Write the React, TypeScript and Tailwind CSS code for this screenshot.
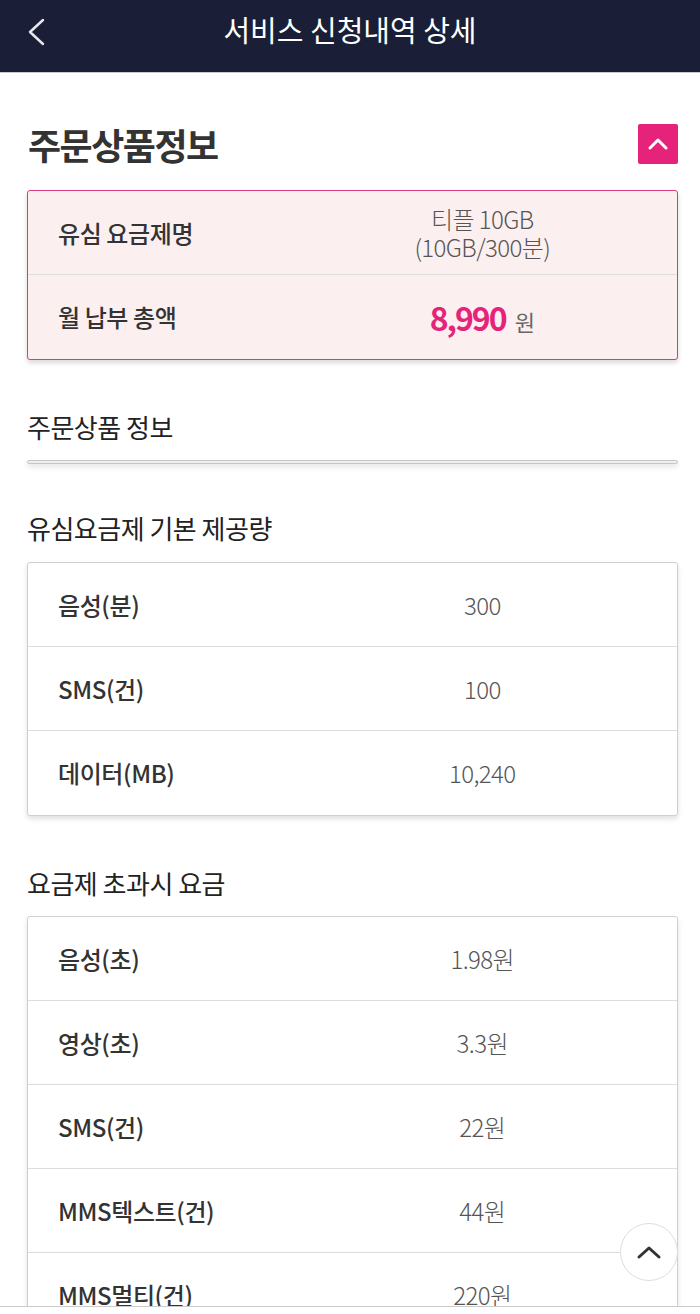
import React from 'react'

const basicRows = [
  { label: '음성(분)', value: '300' },
  { label: 'SMS(건)', value: '100' },
  { label: '데이터(MB)', value: '10,240' },
]

const overRows = [
  { label: '음성(초)', value: '1.98원' },
  { label: '영상(초)', value: '3.3원' },
  { label: 'SMS(건)', value: '22원' },
  { label: 'MMS텍스트(건)', value: '44원' },
  { label: 'MMS멀티(건)', value: '220원' },
  { label: '데이터(MB)', value: '22.53원' },
]

const InfoTable = ({ rows }: { rows: { label: string; value: string }[] }) => {
  return (
    <div className="border border-[#cfcfcf] rounded-[3px] bg-white shadow-[0_3px_5px_rgba(0,0,0,0.12)]">
      {rows.map((r, i) => (
        <div
          key={r.label + i}
          className={
            'flex items-center h-[84px] ' + (i < rows.length - 1 ? 'border-b border-[#dcdcdc]' : '')
          }
        >
          <div className="w-[40%] pl-[30px] text-[24px] font-medium tracking-[-0.4px] text-[#333]">{r.label}</div>
          <div className="w-[60%] text-center text-[24px] font-light tracking-[-0.6px] text-[#555]">{r.value}</div>
        </div>
      ))}
    </div>
  )
}

const App = () => {
  return (
    <div className="min-h-[1314px] bg-white" style={{ fontFamily: '"Noto Sans CJK KR", "Noto Sans", sans-serif' }}>
      {/* header */}
      <div className="h-[73px] bg-[#1a1f37] border-b border-[#c9c9c9] flex items-center justify-center relative pb-[12px]">
        <svg className="absolute left-[24px] top-[17px]" width="24" height="30" viewBox="0 0 24 30" fill="none">
          <path d="M19 3 L6 15 L19 27" stroke="#e8e8ee" strokeWidth="2.4" strokeLinecap="round" strokeLinejoin="round" />
        </svg>
        <h1 className="text-white text-[29px] font-normal">서비스 신청내역 상세</h1>
      </div>

      <div className="pl-[27px] pr-[22px]">
        <div className="mt-[51px] h-[40px] flex items-center justify-between">
          <h2 className="text-[36px] leading-[40px] font-bold tracking-[-1.5px] text-[#333] pl-[1px]">주문상품정보</h2>
          <button className="w-[40px] h-[40px] rounded-[2px] bg-[#e6237b] flex items-center justify-center">
            <svg width="22" height="14" viewBox="0 0 22 14" fill="none">
              <path d="M3 11 L11 3 L19 11" stroke="white" strokeWidth="3" strokeLinecap="round" strokeLinejoin="round" />
            </svg>
          </button>
        </div>

        <div className="mt-[26px] border border-[#d93a80] rounded-[3px] bg-[#fcefef] shadow-[0_3px_5px_rgba(0,0,0,0.15)]">
          <div className="flex items-center h-[84px] border-b border-[#dedede]">
            <div className="w-[40%] pl-[30px] text-[24px] font-medium tracking-[-0.4px] text-[#333]">유심 요금제명</div>
            <div className="w-[60%] text-center text-[24px] leading-[28px] font-light tracking-[-0.6px] text-[#555]">
              티플 10GB
              <br />
              (10GB/300분)
            </div>
          </div>
          <div className="flex items-center h-[84px]">
            <div className="w-[40%] pl-[30px] text-[24px] font-medium tracking-[-0.4px] text-[#333]">월 납부 총액</div>
            <div className="w-[60%] text-center">
              <span className="text-[32px] font-bold tracking-[-2px] text-[#e6237b]">8,990</span>
              <span className="ml-[9px] text-[22px] text-[#666]">원</span>
            </div>
          </div>
        </div>

        <div className="mt-[40px] h-[52px] flex items-center">
          <p className="text-[26px] tracking-[-0.5px] text-[#222]">주문상품 정보</p>
        </div>
        <div className="mt-[8px] h-[4px] border border-[#c6c6c6] bg-[#efefef] rounded-[2px] shadow-[0_3px_5px_rgba(0,0,0,0.12)]" />

        <p className="mt-[48px] text-[26px] leading-[32px] tracking-[-0.5px] text-[#222]">유심요금제 기본 제공량</p>
        <div className="mt-[18px]">
          <InfoTable rows={basicRows} />
        </div>

        <p className="mt-[51px] text-[26px] leading-[32px] tracking-[-0.5px] text-[#222]">요금제 초과시 요금</p>
        <div className="mt-[17px] pb-[40px]">
          <InfoTable rows={overRows} />
        </div>
      </div>

      {/* scroll top */}
      <button className="fixed right-[22px] bottom-[33px] w-[58px] h-[58px] rounded-full bg-white border border-[#dddddd] flex items-center justify-center">
        <svg width="26" height="16" viewBox="0 0 26 16" fill="none">
          <path d="M3 13 L13 4 L23 13" stroke="#333" strokeWidth="3" strokeLinecap="round" strokeLinejoin="round" />
        </svg>
      </button>
      <div className="fixed left-0 right-0 bottom-0 h-[8px] bg-white border-t border-[#cccccc]" />
    </div>
  )
}

export default App
